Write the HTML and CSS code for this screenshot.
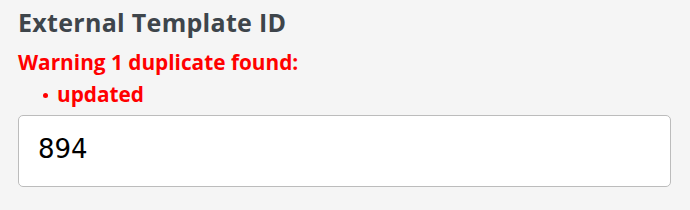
FILE: index.html
```html
<!DOCTYPE HTML>
<html>

<head>
  <meta charset="utf-8">
  <link rel="stylesheet" href="styles.css">
</head>

<body>
  <div class="field">
    <label class="field-label" for="external-id">External Template ID</label>
    <div class="warning">
      <p class="warning-title">Warning 1 duplicate found:</p>
      <ul class="warning-list">
        <li>updated</li>
      </ul>
    </div>
    <input class="field-input" id="external-id" type="text" value="894">
  </div>
</body>

</html>
```

FILE: styles.css
```css
body {
  margin: 0;
  background-color: #f5f5f5;
  font-family: "Open Sans", "Liberation Sans", sans-serif;
}

.field {
  padding: 5px 19px 0 18px;
}

.field-label {
  display: block;
  font-size: 25px;
  line-height: 34px;
  letter-spacing: 0.3px;
  font-weight: bold;
  color: #3e454b;
}

.warning {
  color: #ff0000;
  font-weight: bold;
  font-size: 20.8px;
}

.warning-title {
  margin: 7px 0 0;
  line-height: 32px;
}

.warning-list {
  margin: 0;
  padding-left: 25px;
  line-height: 32px;
  list-style: none;
}

.warning-list li::before {
  content: "";
  display: inline-block;
  width: 5px;
  height: 5px;
  border-radius: 50%;
  background: #ff0000;
  vertical-align: middle;
  margin: -2px 9px 0 0;
}

.field-input {
  display: block;
  box-sizing: border-box;
  width: 100%;
  height: 72px;
  margin-top: 5px;
  padding: 0 19px 4px;
  border: 1px solid #bcbcbc;
  border-radius: 5px;
  background: #fff;
  font-family: "DejaVu Sans", sans-serif;
  font-size: 26px;
  color: #000;
}
```
